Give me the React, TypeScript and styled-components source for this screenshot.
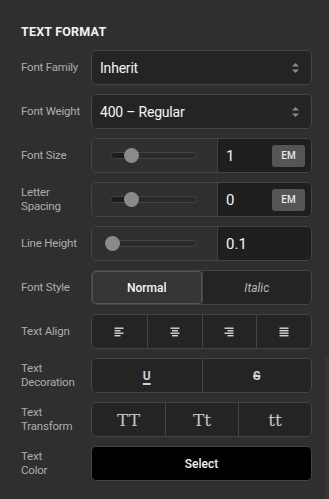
import React from "react";
import styled, { createGlobalStyle, css } from "styled-components";

const GlobalStyle = createGlobalStyle`
  html, body {
    margin: 0;
    padding: 0;
    background: #2f2f2f;
  }
  body {
    font-family: Roboto, "Liberation Sans", Arial, sans-serif;
    -webkit-font-smoothing: antialiased;
  }
`;

const Panel = styled.div`
  position: relative;
  width: 329px;
  height: 499px;
  box-sizing: border-box;
  padding: 25px 17px 0 21px;
  background: #2f2f2f;
  overflow: hidden;
`;

const Heading = styled.h2`
  margin: 0 0 12px 0;
  font-size: 12.5px;
  line-height: 13px;
  font-weight: 700;
  letter-spacing: 0.2px;
  color: #f2f2f2;
`;

const Rows = styled.div`
  display: flex;
  flex-direction: column;
  gap: 9px;
`;

const Row = styled.div`
  display: grid;
  grid-template-columns: 70px 221px;
  height: 35px;
  align-items: center;
`;

const Label = styled.div`
  font-size: 11.5px;
  line-height: 13.5px;
  letter-spacing: -0.2px;
  color: #adadad;
  white-space: pre-line;
`;

const controlBox = css`
  box-sizing: border-box;
  height: 35px;
  border: 1px solid #444;
  border-radius: 5px;
  overflow: hidden;
`;

const Select = styled.div`
  ${controlBox};
  display: flex;
  align-items: center;
  justify-content: space-between;
  padding: 0 11px 0 8px;
  background: #242424;
  color: #f4f4f4;
  font-size: 14px;
  letter-spacing: -0.2px;
`;

const SliderField = styled.div`
  ${controlBox};
  display: grid;
  grid-template-columns: 126px 1fr;
`;

const SliderPart = styled.div`
  display: flex;
  align-items: center;
  padding-left: 19px;
  border-right: 1px solid #444;
  background: #2f2f2f;
`;

const Track = styled.div`
  position: relative;
  width: 86px;
  height: 7px;
  box-sizing: border-box;
  border: 1px solid #444;
  border-radius: 4px;
  background: #2a2a2a;
`;

const TrackFill = styled.div`
  height: 100%;
  border-radius: 4px 0 0 4px;
  background: #1b1b1b;
`;

const Thumb = styled.div`
  position: absolute;
  top: 50%;
  width: 15px;
  height: 15px;
  margin: -7.5px 0 0 -7.5px;
  border-radius: 50%;
  background: #8a8a8a;
`;

const InputPart = styled.div`
  display: flex;
  align-items: center;
  justify-content: space-between;
  padding: 0 6px 0 8px;
  background: #1f1f1f;
  color: #f4f4f4;
  font-size: 15px;
`;

const UnitButton = styled.div`
  width: 33px;
  height: 22px;
  border-radius: 3px;
  background: #555;
  color: #e6e6e6;
  font-size: 10px;
  font-weight: 500;
  display: flex;
  align-items: center;
  justify-content: center;
`;

const Segmented = styled.div<{ $count: number }>`
  ${controlBox};
  display: grid;
  grid-template-columns: repeat(${(p) => p.$count}, 1fr);
  background: #242424;
`;

const Segment = styled.div<{ $active?: boolean; $serif?: boolean; $italic?: boolean }>`
  display: flex;
  align-items: center;
  justify-content: center;
  border-left: 1px solid #444;
  color: #c8c8c8;
  font-size: 12px;
  &:first-child {
    border-left: none;
  }
  ${(p) =>
    p.$active &&
    css`
      background: #353535;
      color: #f6f6f6;
      font-weight: 500;
      box-shadow: inset 0 0 0 1px #555;
      border-radius: 4px;
    `}
  ${(p) =>
    p.$italic &&
    css`
      font-style: italic;
      color: #b8b8b8;
    `}
  ${(p) =>
    p.$serif &&
    css`
      font-family: "DejaVu Serif", "Liberation Serif", serif;
      font-size: 17px;
      color: #c4c4c4;
    `}
`;

const DecoGlyph = styled.span<{ $kind: "underline" | "strike" }>`
  font-size: 12px;
  font-weight: 700;
  color: #d0d0d0;
  text-decoration: ${(p) => (p.$kind === "underline" ? "underline" : "line-through")};
  text-decoration-thickness: 1.5px;
  text-underline-offset: 3px;
`;

const ColorButton = styled.div`
  ${controlBox};
  display: flex;
  align-items: center;
  justify-content: center;
  background: #000;
  color: #f2f2f2;
  font-size: 12px;
  font-weight: 500;
`;

const ScrollThumb = styled.div`
  position: absolute;
  right: 0;
  top: 357px;
  bottom: 0;
  width: 4px;
  background: #363636;
`;

const Chevrons = () => (
  <svg width="9" height="12" viewBox="0 0 9 12">
    <path d="M1 4.5 L4.5 1 L8 4.5 Z" fill="#8c8c8c" />
    <path d="M1 7.5 L4.5 11 L8 7.5 Z" fill="#8c8c8c" />
  </svg>
);

const AlignIcon = ({ mode }: { mode: "left" | "center" | "right" | "justify" }) => {
  const lens = mode === "justify" ? [9, 9, 9, 9] : [9, 6, 9, 6];
  return (
    <svg width="10" height="10" viewBox="0 0 10 10">
      {lens.map((w, i) => {
        const x = mode === "left" || mode === "justify" ? 0.5 : mode === "right" ? 9.5 - w : (10 - w) / 2;
        return <rect key={i} x={x} y={0.5 + i * 2.5} width={w} height={1.4} fill="#d6d6d6" />;
      })}
    </svg>
  );
};

const SliderRow = ({ label, value, pos, unit }: { label: string; value: string; pos: number; unit?: boolean }) => (
  <Row>
    <Label>{label}</Label>
    <SliderField>
      <SliderPart>
        <Track>
          <TrackFill style={{ width: `${pos}%` }} />
          <Thumb style={{ left: `${pos}%` }} />
        </Track>
      </SliderPart>
      <InputPart>
        <span>{value}</span>
        {unit && <UnitButton>EM</UnitButton>}
      </InputPart>
    </SliderField>
  </Row>
);

export default function App() {
  return (
    <>
      <GlobalStyle />
      <Panel>
        <Heading>TEXT FORMAT</Heading>
        <Rows>
          <Row>
            <Label>Font Family</Label>
            <Select>
              <span>Inherit</span>
              <Chevrons />
            </Select>
          </Row>
          <Row>
            <Label>Font Weight</Label>
            <Select>
              <span>400 – Regular</span>
              <Chevrons />
            </Select>
          </Row>
          <SliderRow label="Font Size" value="1" pos={23} unit />
          <SliderRow label={"Letter\nSpacing"} value="0" pos={23} unit />
          <SliderRow label="Line Height" value="0.1" pos={0} />
          <Row>
            <Label>Font Style</Label>
            <Segmented $count={2}>
              <Segment $active>Normal</Segment>
              <Segment $italic>Italic</Segment>
            </Segmented>
          </Row>
          <Row>
            <Label>Text Align</Label>
            <Segmented $count={4}>
              <Segment><AlignIcon mode="left" /></Segment>
              <Segment><AlignIcon mode="center" /></Segment>
              <Segment><AlignIcon mode="right" /></Segment>
              <Segment><AlignIcon mode="justify" /></Segment>
            </Segmented>
          </Row>
          <Row>
            <Label>{"Text\nDecoration"}</Label>
            <Segmented $count={2}>
              <Segment><DecoGlyph $kind="underline">U</DecoGlyph></Segment>
              <Segment><DecoGlyph $kind="strike">S</DecoGlyph></Segment>
            </Segmented>
          </Row>
          <Row>
            <Label>{"Text\nTransform"}</Label>
            <Segmented $count={3}>
              <Segment $serif>TT</Segment>
              <Segment $serif>Tt</Segment>
              <Segment $serif>tt</Segment>
            </Segmented>
          </Row>
          <Row>
            <Label>{"Text\nColor"}</Label>
            <ColorButton>Select</ColorButton>
          </Row>
        </Rows>
        <ScrollThumb />
      </Panel>
    </>
  );
}
